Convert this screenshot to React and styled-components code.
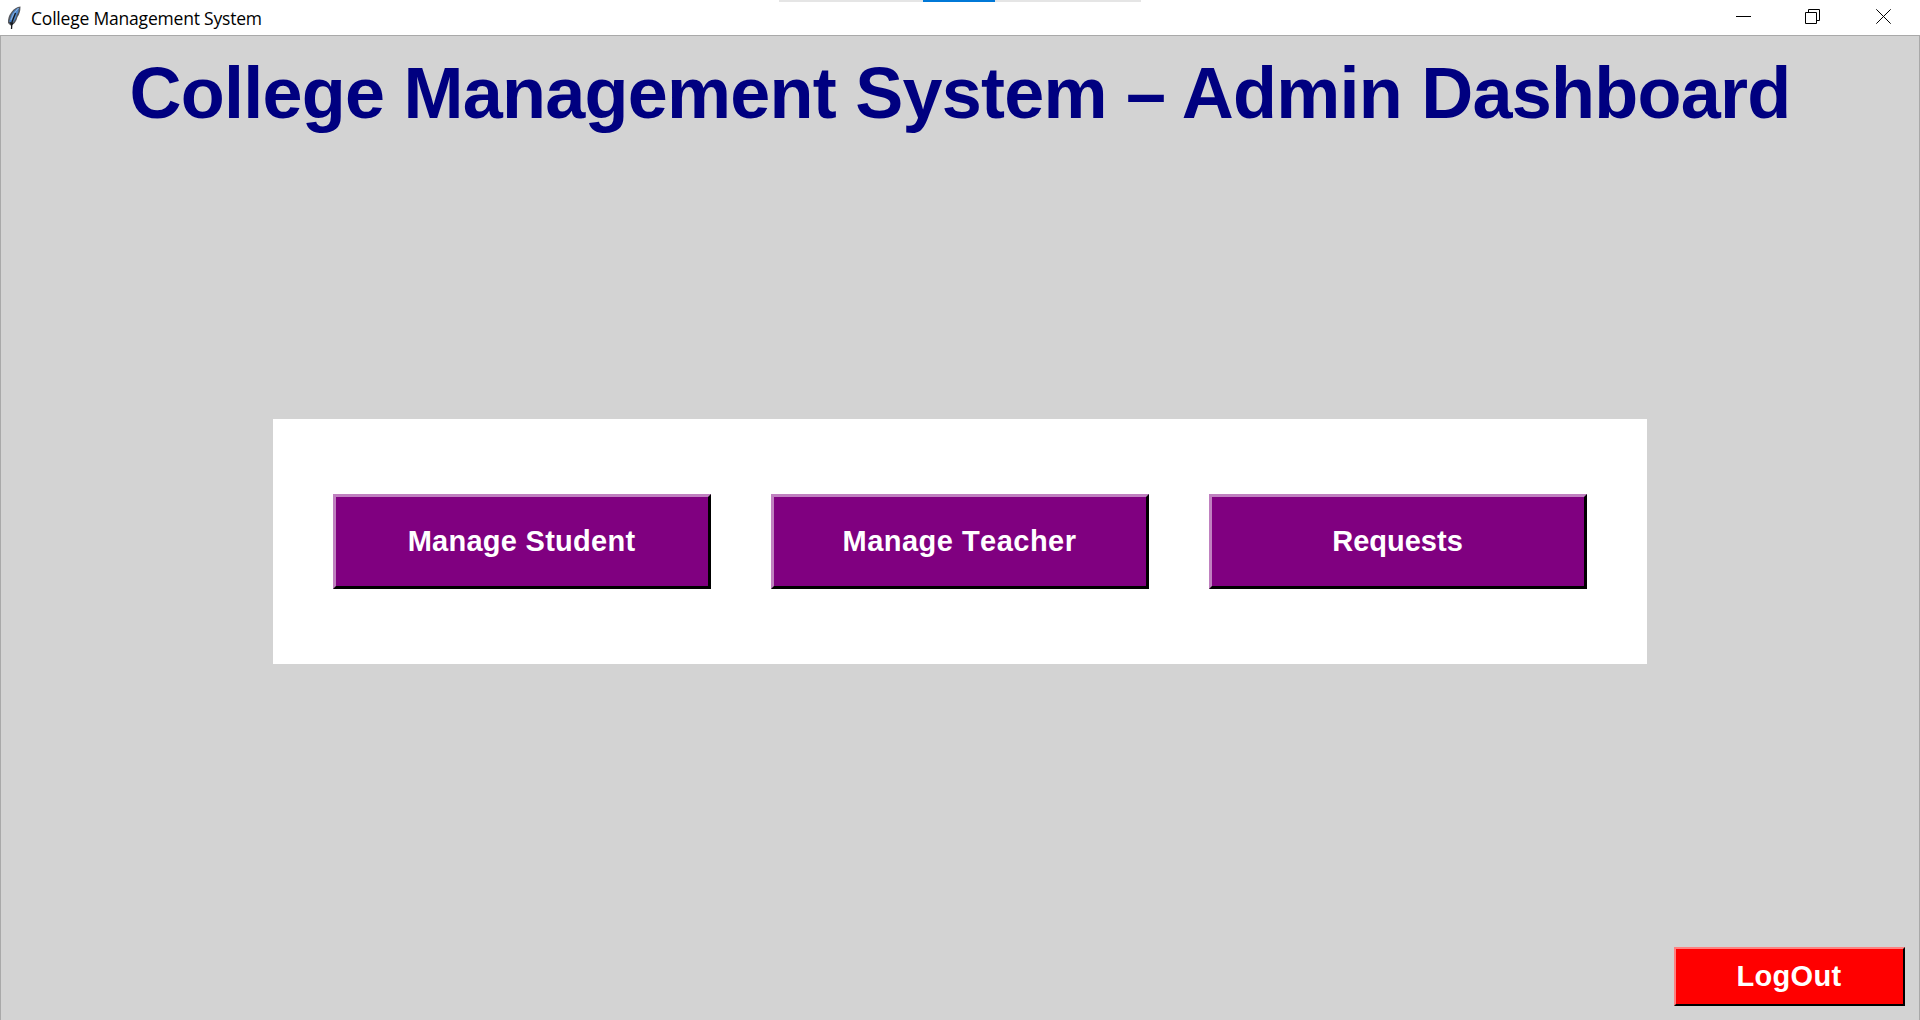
import React from 'react';
import styled, { createGlobalStyle } from 'styled-components';

const GlobalStyle = createGlobalStyle`
  * { box-sizing: border-box; }
  body { margin: 0; overflow: hidden; }
`;

const Window = styled.div`
  display: flex;
  flex-direction: column;
  width: 1920px;
  height: 1020px;
  background: #fff;
  font-family: 'Liberation Sans', Arial, sans-serif;
`;

const TitleBar = styled.header`
  position: relative;
  display: flex;
  align-items: center;
  height: 35px;
  padding-left: 5px;
`;

const Caption = styled.span`
  flex: 1;
  margin-left: 7px;
  padding-top: 1px;
  color: #000;
  font: 17.5px/24px 'Open Sans', 'Noto Sans', sans-serif;
  letter-spacing: -0.2px;
  white-space: nowrap;
`;

const Controls = styled.div`
  display: flex;
  height: 33px;
  align-self: flex-start;
`;

const ControlButton = styled.button`
  display: grid;
  place-items: center;
  width: ${(p) => p.$width}px;
  padding: 0;
  border: 0;
  background: transparent;
`;

const TopProgress = styled.div`
  position: absolute;
  top: 0;
  left: 779px;
  display: flex;
  width: 362px;
  height: 2px;
  padding-left: 144px;
  background: #e5e5e5;
`;

const ProgressMark = styled.div`
  width: 72px;
  background: #0078d7;
`;

const Body = styled.main`
  display: flex;
  flex: 1;
  flex-direction: column;
  align-items: center;
  border: 1px solid #a9a9a9;
  border-bottom: 0;
  background: #d3d3d3;
`;

const Heading = styled.h1`
  margin: 15px 0 0;
  height: 84px;
  color: #000080;
  font-size: 72px;
  font-weight: bold;
  line-height: 84px;
  letter-spacing: -0.76px;
  white-space: nowrap;
`;

const Panel = styled.section`
  display: flex;
  gap: 60px;
  margin-top: 284px;
  padding: 75px 60px;
  background: #fff;
`;

const RaisedButton = styled.button`
  display: flex;
  align-items: center;
  justify-content: center;
  width: 378px;
  height: 95px;
  padding: 0 1px 2px 0;
  border: 3px solid;
  border-color: #c080c0 #000 #000 #c080c0;
  border-radius: 0;
  background: #800080;
  color: #fff;
  font: bold 29px/34px 'Liberation Sans', Arial, sans-serif;
  font-kerning: none;
  letter-spacing: ${(p) => p.$spacing || 0}px;
  white-space: nowrap;
`;

const LogoutButton = styled(RaisedButton)`
  align-self: flex-end;
  width: 231px;
  height: 59px;
  margin: auto 14px 14px 0;
  border-width: 2px;
  border-color: #ff8080 #000 #000 #ff8080;
  background: #f00;
`;

function Feather() {
  return (
    <svg width="19" height="24" viewBox="0 0 19 24">
      <path d="M15.5 0.5 Q10 1 6.5 6 Q2.5 11 3 17 L5.5 19.5 Q11 18 12.5 11 Q15.5 7 15.5 0.5Z" fill="#55585e" />
      <path d="M13.8 1.8 Q8.5 4 6.3 9 L4.3 15.5 L6.2 17.6 Q10.4 15 11.6 9.5 Q14 6 13.8 1.8Z" fill="#4b86cc" />
      <path d="M13.5 2 L8.5 8 L6 14" stroke="#8fb5e2" strokeWidth="1" fill="none" />
      <path d="M10.5 7 L7 16 L6.5 23" stroke="#16181d" strokeWidth="1.3" fill="none" />
      <path d="M4.5 16 L6.5 20 L8.5 17" fill="#16181d" />
    </svg>
  );
}

const controls = [
  { name: 'Minimize', width: 69, art: <path d="M0 7.5H15" /> },
  { name: 'Restore', width: 69, art: <path d="M0.5 3.5H11.5V14.5H0.5ZM3.5 3.5V0.5H14.5V11.5H11.5" /> },
  { name: 'Close', width: 73, art: <path d="M0.3 0.3L14.7 14.7M14.7 0.3L0.3 14.7" /> },
];

const actions = [
  { label: 'Manage Student', spacing: 0.27 },
  { label: 'Manage Teacher', spacing: 0.48 },
  { label: 'Requests', spacing: 0 },
];

export default function App() {
  return (
    <Window>
      <GlobalStyle />
      <TitleBar>
        <Feather />
        <Caption>College Management System</Caption>
        <TopProgress><ProgressMark /></TopProgress>
        <Controls>
          {controls.map((c) => (
            <ControlButton key={c.name} aria-label={c.name} $width={c.width}>
              <svg width="15" height="15" viewBox="0 0 15 15" fill="none" stroke="#000" strokeWidth="1">{c.art}</svg>
            </ControlButton>
          ))}
        </Controls>
      </TitleBar>
      <Body>
        <Heading>College Management System – Admin Dashboard</Heading>
        <Panel>
          {actions.map((a) => <RaisedButton key={a.label} $spacing={a.spacing}>{a.label}</RaisedButton>)}
        </Panel>
        <LogoutButton $spacing={0.3}>LogOut</LogoutButton>
      </Body>
    </Window>
  );
}
